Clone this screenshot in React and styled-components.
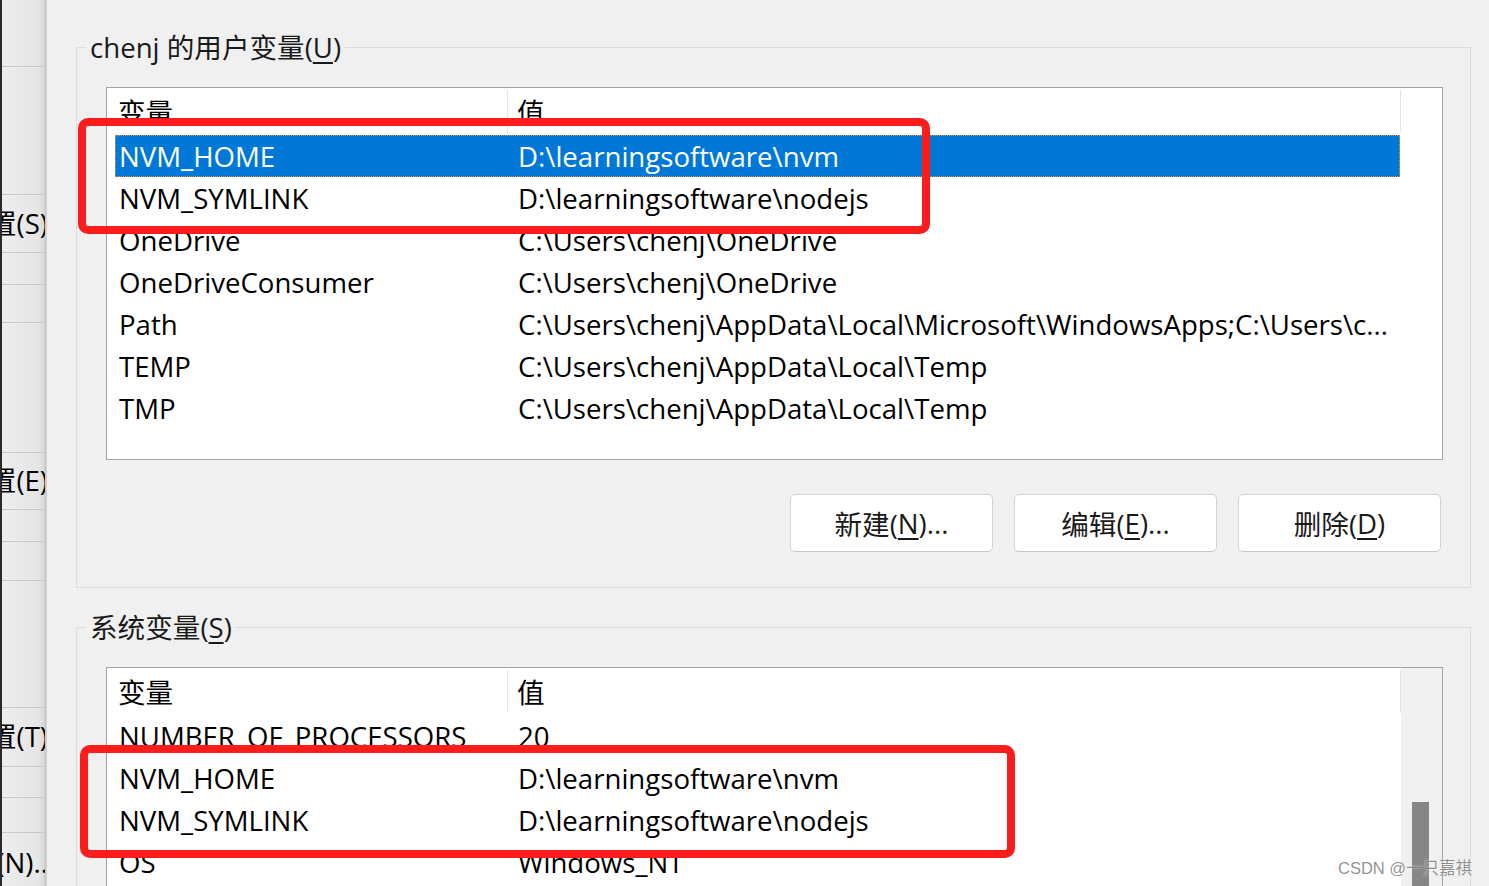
import React from "react";
import styled, { createGlobalStyle } from "styled-components";

const Global = createGlobalStyle`
  html, body { margin: 0; padding: 0; background: #f0f0f0; }
  body { width: 1489px; height: 886px; overflow: hidden; }
  * { box-sizing: border-box; }
`;

const FONT = `"Open Sans", "Noto Sans CJK SC", sans-serif`;

const Root = styled.div`
  position: relative;
  width: 1489px;
  height: 886px;
  overflow: hidden;
  display: flex;
  background: #f0f0f0;
  font-family: ${FONT};
  font-size: 27.6px;
  color: #000;
`;

const Strip = styled.div`
  width: 47px;
  flex: none;
  display: flex;
  flex-direction: column;
  background: linear-gradient(
    to right,
    #2a2a2a 0,
    #2a2a2a 2px,
    #ededed 2px,
    #e6e6e6 38px,
    #dadada 44px,
    #c4c4c4 45px,
    #d6d6d6 47px
  );
`;

const StripCell = styled.div`
  height: ${(p) => p.$h}px;
  flex: none;
  border-bottom: 1px solid #c9c9c9;
  margin-left: 2px;
  margin-right: 2px;
  display: flex;
  align-items: center;
  justify-content: flex-end;
  overflow: hidden;
  white-space: nowrap;
  line-height: 1;
`;

const StripText = styled.span`
  margin-right: -3px;
  flex: none;
`;

const Main = styled.div`
  flex: 1;
  padding: 47px 18px 0 29px;
  display: flex;
  flex-direction: column;
`;

const Group = styled.div`
  border: 1px solid #dcdcdc;
  padding: 0 27px ${(p) => p.$pb}px 29px;
  margin-top: ${(p) => p.$mt}px;
  flex: none;
`;

const GroupTitle = styled.div`
  width: fit-content;
  margin: -20px 0 0 -20px;
  padding: 0 4px;
  height: 38px;
  line-height: 38px;
  background: #f0f0f0;
  white-space: nowrap;
  color: #1a1a1a;
`;

const ListBox = styled.div`
  margin-top: 21px;
  height: ${(p) => p.$h}px;
  border: 1px solid #a3a3a3;
  background: #fff;
  display: flex;
  overflow: hidden;
`;

const ListContent = styled.div`
  width: 1294px;
  flex: none;
  display: flex;
  flex-direction: column;
`;

const HeaderRow = styled.div`
  height: 47px;
  display: flex;
  flex: none;
`;

const HeaderCell = styled.div`
  width: ${(p) => p.$w}px;
  height: 43px;
  margin-top: 2px;
  border-right: 1px solid #e5e5e5;
  padding-left: ${(p) => p.$pl}px;
  line-height: 45px;
  white-space: nowrap;
  overflow: hidden;
`;

const Row = styled.div`
  height: 42px;
  flex: none;
  margin: 0 1px 0 8px;
  padding-left: 3px;
  display: grid;
  grid-template-columns: 399px 1fr;
  align-items: center;
  line-height: 40px;
  white-space: nowrap;
  background: ${(p) => (p.$selected ? "#0078d7" : "transparent")};
  color: ${(p) => (p.$selected ? "#fff" : "#000")};
  border: 1px dotted ${(p) => (p.$selected ? "#e8923a" : "transparent")};
`;

const Cell = styled.span`
  overflow: hidden;
  white-space: nowrap;
`;

const ScrollCol = styled.div`
  flex: 1;
  background: ${(p) => (p.$scroll ? "#f0f0f0" : "#fff")};
  display: flex;
  flex-direction: column;
`;

const Thumb = styled.div`
  margin-top: 134px;
  margin-left: 11px;
  width: 17px;
  height: 200px;
  background: #868686;
`;

const ButtonRow = styled.div`
  margin-top: 34px;
  display: flex;
  justify-content: flex-end;
  gap: 21px;
  padding-right: 2px;
`;

const Button = styled.div`
  width: 203px;
  height: 58px;
  background: #fff;
  border: 1px solid #d2d2d2;
  border-bottom-color: #c4c4c4;
  border-radius: 5px;
  display: flex;
  align-items: center;
  justify-content: center;
  white-space: nowrap;
  color: #1a1a1a;
`;

const U = styled.span`
  text-decoration: underline;
  text-decoration-thickness: 2px;
  text-underline-offset: 4px;
`;

const RedBox = styled.div`
  position: absolute;
  left: ${(p) => p.$x}px;
  top: ${(p) => p.$y}px;
  width: ${(p) => p.$w}px;
  height: ${(p) => p.$h}px;
  border: 8px solid #fb1c1c;
  border-radius: 10px;
  pointer-events: none;
`;

const Watermark = styled.div`
  position: absolute;
  left: 1338px;
  top: 856px;
  font-family: "Liberation Sans", "Noto Sans CJK SC", sans-serif;
  font-size: 16.5px;
  line-height: 24px;
  color: rgba(110, 110, 110, 0.75);
  text-shadow: 0 0 2px rgba(255, 255, 255, 0.9);
  white-space: nowrap;
`;

const stripCells = [
  { h: 67 },
  { h: 128 },
  { h: 58, t: "位置(S)" },
  { h: 32 },
  { h: 38 },
  { h: 130 },
  { h: 57, t: "位置(E)" },
  { h: 32 },
  { h: 39 },
  { h: 127 },
  { h: 59, t: "位置(T)" },
  { h: 31 },
  { h: 35 },
  { h: 60, t: "新建(N).." },
];

const userVars = [
  ["NVM_HOME", "D:\\learningsoftware\\nvm", true],
  ["NVM_SYMLINK", "D:\\learningsoftware\\nodejs"],
  ["OneDrive", "C:\\Users\\chenj\\OneDrive"],
  ["OneDriveConsumer", "C:\\Users\\chenj\\OneDrive"],
  ["Path", "C:\\Users\\chenj\\AppData\\Local\\Microsoft\\WindowsApps;C:\\Users\\c..."],
  ["TEMP", "C:\\Users\\chenj\\AppData\\Local\\Temp"],
  ["TMP", "C:\\Users\\chenj\\AppData\\Local\\Temp"],
];

const sysVars = [
  ["NUMBER_OF_PROCESSORS", "20"],
  ["NVM_HOME", "D:\\learningsoftware\\nvm"],
  ["NVM_SYMLINK", "D:\\learningsoftware\\nodejs"],
  ["OS", "Windows_NT"],
  ["Path", "C:\\Windows\\system32"],
];

function VarList({ rows, height, scroll }) {
  return (
    <ListBox $h={height}>
      <ListContent>
        <HeaderRow>
          <HeaderCell $w={401} $pl={11}>变量</HeaderCell>
          <HeaderCell $w={893} $pl={9}>值</HeaderCell>
        </HeaderRow>
        {rows.map(([k, v, sel]) => (
          <Row key={k} $selected={sel}>
            <Cell>{k}</Cell>
            <Cell>{v}</Cell>
          </Row>
        ))}
      </ListContent>
      <ScrollCol $scroll={scroll}>{scroll && <Thumb />}</ScrollCol>
    </ListBox>
  );
}

export default function App() {
  return (
    <>
      <Global />
      <Root>
        <Strip>
          {stripCells.map((c, i) => (
            <StripCell key={i} $h={c.h}>
              {c.t && <StripText>{c.t}</StripText>}
            </StripCell>
          ))}
        </Strip>
        <Main>
          <Group $pb={35} $mt={0}>
            <GroupTitle>
              chenj 的用户变量(<U>U</U>)
            </GroupTitle>
            <VarList rows={userVars} height={373} />
            <ButtonRow>
              <Button>
                新建(<U>N</U>)...
              </Button>
              <Button>
                编辑(<U>E</U>)...
              </Button>
              <Button>
                删除(<U>D</U>)
              </Button>
            </ButtonRow>
          </Group>
          <Group $pb={35} $mt={39}>
            <GroupTitle>
              系统变量(<U>S</U>)
            </GroupTitle>
            <VarList rows={sysVars} height={373} scroll />
          </Group>
        </Main>
        <RedBox $x={78} $y={118} $w={852} $h={116} />
        <RedBox $x={80} $y={745} $w={935} $h={113} />
        <Watermark>CSDN @一只嘉祺</Watermark>
      </Root>
    </>
  );
}
